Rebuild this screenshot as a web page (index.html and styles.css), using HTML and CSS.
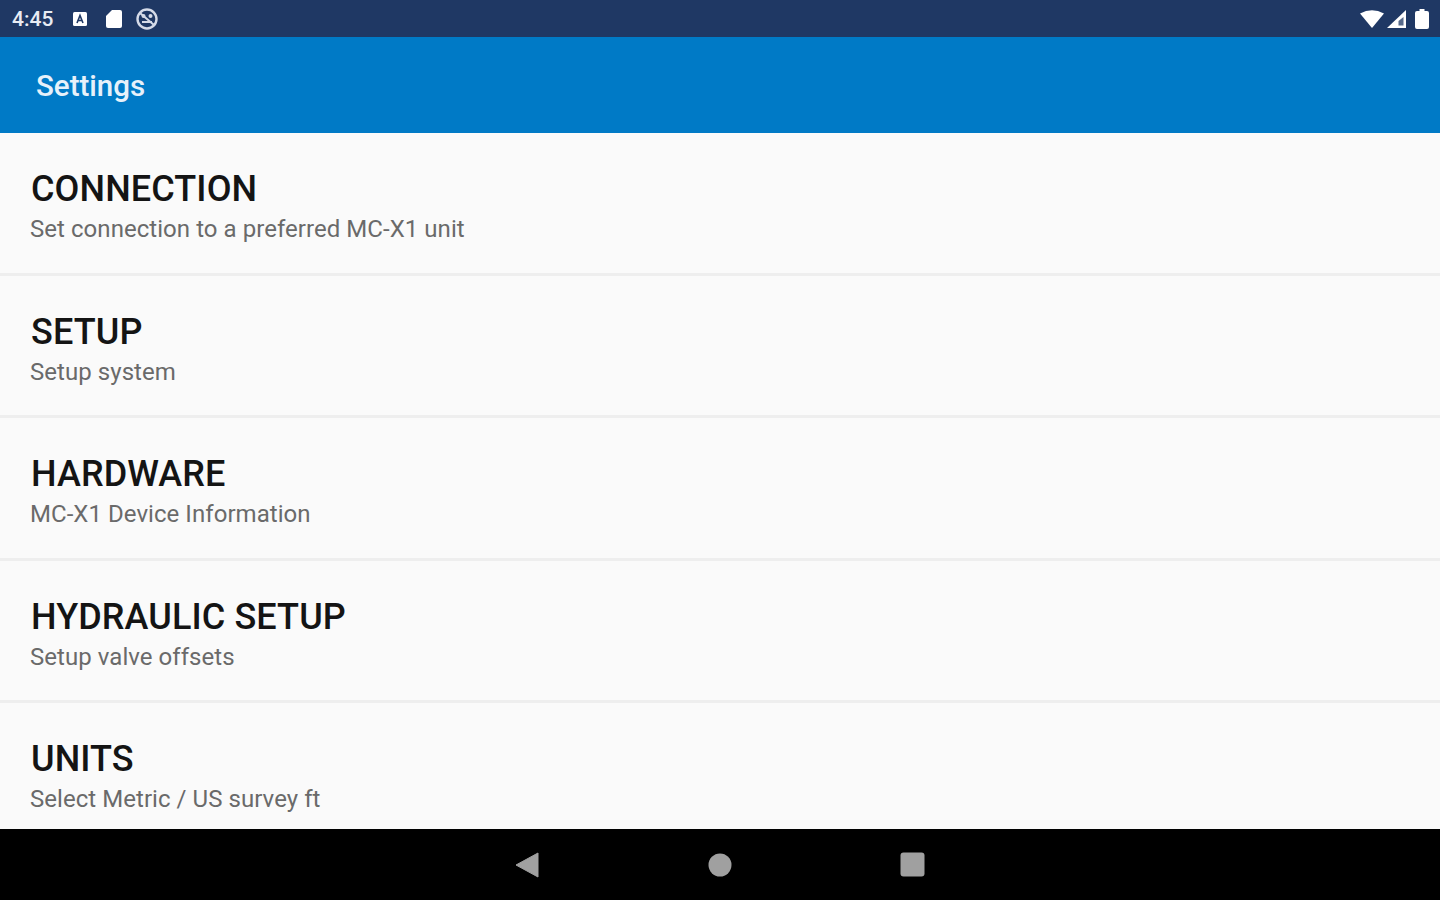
FILE: index.html
```html
<!DOCTYPE html>
<html lang="en">
<head>
  <meta charset="UTF-8">
  <title>Settings</title>
  <link rel="stylesheet" href="styles.css">
</head>
<body>
  <div class="status-bar">
    <div class="status-left">
      <span class="time">4:45</span>
      <svg class="icon-a" width="16" height="16" viewBox="0 0 16 16">
        <rect x="1" y="1" width="14" height="14" rx="1.5" fill="#fff"/>
        <path d="M5 12 L8 4.5 L11 12 M6.2 9.5 H9.8" fill="none" stroke="#1f3864" stroke-width="1.6"/>
      </svg>
      <svg class="icon-sd" width="18" height="20" viewBox="0 0 18 20">
        <path d="M7 1 H15 Q17 1 17 3 V17 Q17 19 15 19 H3 Q1 19 1 17 V7 Z" fill="#fff"/>
      </svg>
      <svg class="icon-block" width="24" height="24" viewBox="0 0 24 24">
        <circle cx="12" cy="12" r="9.5" fill="none" stroke="#d5dbe8" stroke-width="2.4"/>
        <circle cx="8.5" cy="9" r="2" fill="#d5dbe8"/>
        <circle cx="15.5" cy="9" r="2" fill="#d5dbe8"/>
        <path d="M7 15 H17 M5 6 L19 18" fill="none" stroke="#d5dbe8" stroke-width="2"/>
      </svg>
    </div>
    <div class="status-right">
      <svg class="icon-wifi" width="24" height="18" viewBox="0 0 24 18">
        <path d="M0 3.5 Q12 -3 24 3.5 L12 18 Z" fill="#fff"/>
      </svg>
      <svg class="icon-signal" width="20" height="18" viewBox="0 0 20 18">
        <path d="M19 0 V18 H0 Z" fill="#fff"/>
        <path d="M16.5 7 V15.5 H11.5 V11 Z" fill="#1f3864" opacity="0.75"/>
      </svg>
      <svg width="14" height="20" viewBox="0 0 14 20">
        <path d="M4.5 0 H9.5 V2 H12 Q14 2 14 4 V18 Q14 20 12 20 H2 Q0 20 0 18 V4 Q0 2 2 2 H4.5 Z" fill="#fff"/>
      </svg>
    </div>
  </div>

  <header class="app-bar">
    <h1>Settings</h1>
  </header>

  <main class="settings">
    <div class="setting-row">
      <div class="setting-title">CONNECTION</div>
      <div class="setting-sub">Set connection to a preferred MC-X1 unit</div>
    </div>
    <div class="setting-row">
      <div class="setting-title">SETUP</div>
      <div class="setting-sub">Setup system</div>
    </div>
    <div class="setting-row">
      <div class="setting-title">HARDWARE</div>
      <div class="setting-sub">MC-X1 Device Information</div>
    </div>
    <div class="setting-row">
      <div class="setting-title">HYDRAULIC SETUP</div>
      <div class="setting-sub">Setup valve offsets</div>
    </div>
    <div class="setting-row">
      <div class="setting-title">UNITS</div>
      <div class="setting-sub">Select Metric / US survey ft</div>
    </div>
  </main>

  <nav class="nav-bar">
    <svg class="nav-back" width="24" height="26" viewBox="0 0 24 26">
      <path d="M23 1 V25 L1 13 Z" fill="#a0a0a0" stroke="#a0a0a0" stroke-linejoin="round"/>
    </svg>
    <svg width="24" height="24" viewBox="0 0 24 24">
      <circle cx="12" cy="12" r="11.5" fill="#a0a0a0"/>
    </svg>
    <svg width="25" height="25" viewBox="0 0 25 25">
      <rect x="0.5" y="0.5" width="24" height="24" rx="3" fill="#a0a0a0"/>
    </svg>
  </nav>
</body>
</html>
```

FILE: styles.css
```css
* {
  margin: 0;
  padding: 0;
  box-sizing: border-box;
}

body {
  width: 1440px;
  height: 900px;
  overflow: hidden;
  display: flex;
  flex-direction: column;
  font-family: Roboto, sans-serif;
  background: #fafafa;
}

.status-bar {
  height: 37px;
  flex: none;
  background: #1f3864;
  display: flex;
  align-items: center;
  justify-content: space-between;
  padding: 0 11px 0 12px;
  color: #e8ecf4;
}

.status-left,
.status-right {
  display: flex;
  align-items: center;
}

.status-left {
  gap: 16px;
}

.status-right {
  gap: 3px;
}

.icon-a {
  margin-left: 2px;
}

.icon-sd {
  margin-left: 1px;
}

.icon-block {
  margin-left: -4px;
}

.icon-signal {
  margin-right: 5px;
}

.time {
  font-size: 21px;
  font-weight: 500;
  width: 42px;
}

.app-bar {
  height: 96px;
  flex: none;
  background: #007ac6;
  display: flex;
  align-items: center;
  padding: 2px 36px 0;
}

.app-bar h1 {
  font-size: 29.5px;
  font-weight: 500;
  color: #e6f1fa;
}

.settings {
  flex: 1;
  overflow: hidden;
}

.setting-row {
  height: 142.5px;
  padding: 35px 30px 0;
  border-bottom: 3px solid #eeeeee;
}

.setting-row:last-child {
  border-bottom: none;
}

.setting-title {
  font-size: 36px;
  line-height: 42px;
  font-weight: 500;
  letter-spacing: 0.1px;
  margin-left: 1px;
  color: #141414;
}

.setting-sub {
  font-size: 24px;
  line-height: 36px;
  letter-spacing: 0.05px;
  color: #6a6a6a;
  margin-top: 1px;
}

.nav-bar {
  height: 71px;
  flex: none;
  background: #000;
  display: flex;
  align-items: center;
  justify-content: center;
  gap: 168px;
}

.nav-back {
  margin-right: 1.5px;
}
```
